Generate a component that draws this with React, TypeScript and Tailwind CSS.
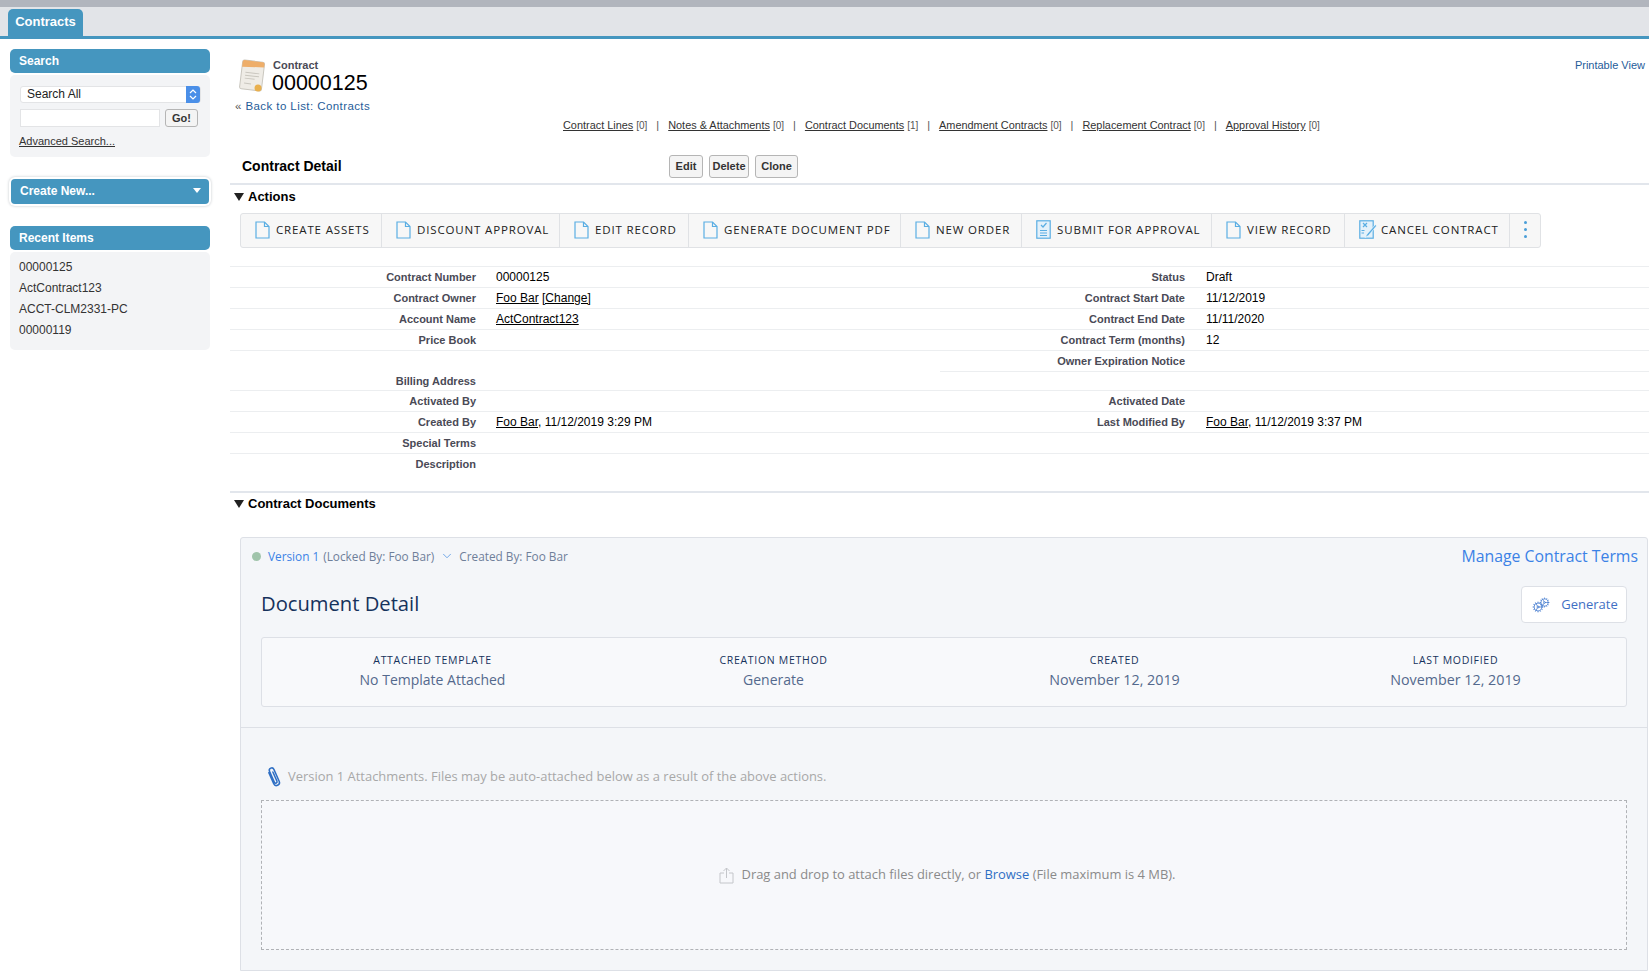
import { ChevronDown, Cog } from "lucide-react";

const arial = "font-['Liberation_Sans',Arial,sans-serif]";
const sf = "font-['Open_Sans',sans-serif]";

const relatedLinks = [
  { label: "Contract Lines", count: "[0]" },
  { label: "Notes & Attachments", count: "[0]" },
  { label: "Contract Documents", count: "[1]" },
  { label: "Amendment Contracts", count: "[0]" },
  { label: "Replacement Contract", count: "[0]" },
  { label: "Approval History", count: "[0]" },
];

const actions = [
  { label: "CREATE ASSETS", w: "w-[141px]", icon: "doc" },
  { label: "DISCOUNT APPROVAL", w: "w-[178px]", icon: "doc" },
  { label: "EDIT RECORD", w: "w-[129px]", icon: "doc" },
  { label: "GENERATE DOCUMENT PDF", w: "w-[212px]", icon: "doc" },
  { label: "NEW ORDER", w: "w-[121px]", icon: "doc" },
  { label: "SUBMIT FOR APPROVAL", w: "w-[190px]", icon: "check" },
  { label: "VIEW RECORD", w: "w-[133px]", icon: "doc" },
  { label: "CANCEL CONTRACT", w: "w-[165px]", icon: "cancel" },
];

const detailButtons = [
  { label: "Edit", w: "w-[34px]" },
  { label: "Delete", w: "w-[40px]" },
  { label: "Clone", w: "w-[43px]" },
];

const DocIcon = () => (
  <svg width="15" height="18" viewBox="0 0 15 18" fill="none" stroke="#5aaee3" strokeWidth="1.2">
    <path d="M1 1h8.5L14 5.5V17H1z" />
    <path d="M9.5 1v4.5H14" />
  </svg>
);

const CheckIcon = () => (
  <svg width="15" height="19" viewBox="0 0 15 19" fill="none" stroke="#5aaee3" strokeWidth="1.2">
    <rect x="0.8" y="0.8" width="13.4" height="17.4" fill="#e4f1fa" />
    <path d="M5 5l2 2 3.5-4M4 10.5h7M4 13h7M4 15.5h7" />
  </svg>
);

const CancelIcon = () => (
  <svg width="18" height="19" viewBox="0 0 18 19" fill="none" stroke="#5aaee3" strokeWidth="1.2">
    <rect x="0.8" y="0.8" width="13.4" height="17.4" fill="#e4f1fa" />
    <path d="M4 3l4 4M8 3L4 7M2.5 10.5h3M2.5 13h2.5" />
    <path d="M16.5 4.5L8 14l-2 3.5 3.5-2L17.5 6z" fill="#5aaee3" stroke="#ffffff" strokeWidth="0.6" />
  </svg>
);

const ContractIcon = () => (
  <svg width="30" height="34" viewBox="0 0 30 34">
    <g transform="rotate(7 15 17)">
      <rect x="4" y="2" width="22" height="29" rx="2" fill="#efece6" stroke="#c9c6be" />
      <path d="M4 9V4a2 2 0 0 1 2-2h18a2 2 0 0 1 2 2v3z" fill="#eeae6a" />
      <path d="M8 14h14M8 17h14M8 20h10M8 25h7" stroke="#c9c6be" />
    </g>
    <circle cx="21" cy="29" r="3.5" fill="#e9b04e" />
  </svg>
);

const PaperclipIcon = () => (
  <svg width="18" height="22" viewBox="0 0 18 22" fill="none" stroke="#2f6fc4" strokeWidth="1.5" strokeLinecap="round">
    <g transform="rotate(-24 9 11)">
      <path d="M6 5v12a3 3 0 0 0 6 0V4a2.4 2.4 0 0 0-4.8 0v12a1.4 1.4 0 0 0 2.8 0V6" />
    </g>
  </svg>
);

const UploadIcon = () => (
  <svg width="15" height="17" viewBox="0 0 15 17" fill="none" stroke="#c4c6ca" strokeWidth="1">
    <path d="M5 6H1v10h13V6h-4" />
    <path d="M7.5 11V1M4.5 4l3-3 3 3" />
  </svg>
);

const Header = ({ title }: { title: string }) => (
  <div className={`h-[24px] rounded-[5px] bg-[#4596bf] pl-[9px] flex items-center text-white font-bold text-[12px] ${arial}`}>
    {title}
  </div>
);

const Row = ({ label, children, tall, line = true }: { label?: string; children?: React.ReactNode; tall?: boolean; line?: boolean }) => (
  <div className={`flex ${tall ? "h-[40px] items-end pb-[1px]" : "h-[21px] items-center"} ${line ? "border-b border-[#eceef0]" : ""}`}>
    <div className="w-[246px] shrink-0 text-right font-bold text-[11px] text-[#4a4a56]">{label}</div>
    <div className="pl-[20px] text-[12px] text-black">{children}</div>
  </div>
);

const RowRight = ({ label, children, short }: { label?: string; children?: React.ReactNode; short?: boolean }) => (
  <div className={`flex ${short ? "h-[19px]" : "h-[21px]"} items-center border-b border-[#eceef0]`}>
    <div className="w-[245px] shrink-0 text-right font-bold text-[11px] text-[#4a4a56]">{label}</div>
    <div className="pl-[21px] text-[12px] text-black">{children}</div>
  </div>
);

const Meta = ({ label, value, size }: { label: string; value: string; size: string }) => (
  <div className="flex-1 flex flex-col items-center pb-[1px]">
    <div className="text-[10.5px] tracking-[0.7px] text-[#16325c] leading-[14px] mb-[3px]">{label}</div>
    <div className={`${size} text-[#54698d] leading-[20px]`}>{value}</div>
  </div>
);

export default function App() {
  return (
    <div className={`w-[1649px] h-[973px] overflow-hidden bg-white ${arial}`}>
      {/* top tab strip */}
      <div className="h-[7px] bg-[#b1b5bd]" />
      <div className="h-[32px] bg-[#e2e4e8] border-b-[3px] border-[#4596bf] pl-[8px] pt-[2px]">
        <div className="w-[75px] h-[27px] rounded-t-[5px] bg-[#4596bf] flex items-center justify-center pb-[1px] text-white font-bold text-[13px]">
          Contracts
        </div>
      </div>

      <div className="flex">
        {/* sidebar */}
        <div className="w-[200px] ml-[10px] mt-[10px] shrink-0">
          <Header title="Search" />
          <div className="mt-[2px] h-[82px] rounded-[5px] bg-[#f3f4f6] px-[9px] pt-[11px]">
            <div className="h-[17px] w-[181px] ml-[1px] flex items-center justify-between rounded-[3px] bg-white border border-[#e3e4e6] pl-[6px] text-[12px] leading-[14px] text-[#222]">
              <span className="pb-[1px]">Search All</span>
              <span className="w-[14px] h-[17px] rounded-r-[3px] bg-[#4a8fe8] flex flex-col items-center justify-center">
                <svg width="8" height="13" viewBox="0 0 8 13" fill="none" stroke="#fff" strokeWidth="1.2">
                  <path d="M1 5l3-3 3 3M1 8l3 3 3-3" />
                </svg>
              </span>
            </div>
            <div className="flex mt-[6px] ml-[1px] gap-[5px]">
              <div className="w-[140px] h-[18px] bg-white border border-[#e3e4e6]" />
              <div className="w-[33px] h-[18px] rounded-[3px] bg-[#f4f4f4] border border-[#b5b5b5] flex items-center justify-center font-bold text-[11px] text-[#333]">
                Go!
              </div>
            </div>
            <div className="mt-[6px] text-[11px] underline text-[#333]">Advanced Search...</div>
          </div>

          <div className="mt-[20px] mx-[-1px] h-[29px] rounded-[6px] bg-white p-[2px] shadow-[0_0_3px_#c4c8cc]">
            <div className="h-[25px] rounded-[4px] bg-[#4596bf] flex items-center justify-between pl-[9px] pr-[8px] pb-[2px] text-white font-bold text-[12px]">
              Create New...
              <span className="w-0 h-0 border-x-[4px] border-x-transparent border-t-[5px] border-t-white" />
            </div>
          </div>

          <div className="mt-[20px]">
            <Header title="Recent Items" />
            <div className="mt-[2px] h-[98px] rounded-[5px] bg-[#f3f4f6] pl-[9px] pt-[5px] text-[12px] text-[#333] leading-[21px]">
              <div>00000125</div>
              <div>ActContract123</div>
              <div>ACCT-CLM2331-PC</div>
              <div>00000119</div>
            </div>
          </div>
        </div>

        {/* main column */}
        <div className="flex-1 ml-[20px] min-w-0">
          <div className="relative h-[80px]">
            <div className="absolute right-[4px] top-[18px] text-[11px] text-[#1f5c99]">Printable View</div>
            <div className="flex pl-[7px] pt-[20px]">
              <ContractIcon />
              <div className="ml-[5px]">
                <div className="font-bold text-[11px] leading-[12px] text-[#4a4a56] ml-[1px]">Contract</div>
                <div className="text-[21.5px] leading-[24px] text-black">00000125</div>
              </div>
            </div>
            <div className="pl-[5px] text-[11.5px] leading-[13px] tracking-[0.42px] text-[#1f5c99] mt-[5px]">
              <span className="text-[#555]">«</span> Back to List: Contracts
            </div>
          </div>

          <div className="ml-[333px] flex items-center text-[10.9px] leading-[13px] text-[#333]">
            {relatedLinks.map((l, i) => (
              <div key={l.label} className="flex items-center">
                {i > 0 && <span className="mx-[9px] text-[#555]">|</span>}
                <span className="underline">{l.label}</span>
                <span className="ml-[3px] text-[10px] text-[#555]">{l.count}</span>
              </div>
            ))}
          </div>

          {/* detail header */}
          <div className="mt-[16px] h-[37px] border-b-2 border-[#e2e6ec] flex items-center pl-[12px] pt-[2px]">
            <div className="w-[427px] font-bold text-[14px] text-black">Contract Detail</div>
            <div className="flex gap-[6px]">
              {detailButtons.map((b) => (
                <div key={b.label} className={`${b.w} h-[23px] rounded-[3px] bg-[#f4f4f4] border border-[#b5b5b5] flex items-center justify-center font-bold text-[11px] text-[#333]`}>
                  {b.label}
                </div>
              ))}
            </div>
          </div>

          <div className="h-[24px] flex items-center pl-[4px] font-bold text-[13px] text-black">
            <span className="w-0 h-0 border-x-[5px] border-x-transparent border-t-[8px] border-t-[#222] mr-[4px]" />
            Actions
          </div>

          {/* actions bar */}
          <div className={`mt-[4px] ml-[10px] w-[1301px] h-[35px] flex rounded-[3px] border border-[#e0e2e5] bg-[#f7f7f7] ${sf}`}>
            {actions.map((a) => (
              <div key={a.label} className={`${a.w} shrink-0 flex items-center pl-[14px] pb-[2px] border-r border-[#e0e2e5] text-[11.5px] tracking-[0.85px] text-[#222]`}>
                <span className={a.icon === "cancel" ? "w-[22px]" : "w-[21px]"}>
                  {a.icon === "doc" && <DocIcon />}
                  {a.icon === "check" && <CheckIcon />}
                  {a.icon === "cancel" && <CancelIcon />}
                </span>
                <span className="whitespace-nowrap">{a.label}</span>
              </div>
            ))}
            <div className="flex-1 flex flex-col items-center justify-center gap-[4px] pb-[2px]">
              <span className="w-[3px] h-[3px] rounded-full bg-[#4a9ed8]" />
              <span className="w-[3px] h-[3px] rounded-full bg-[#4a9ed8]" />
              <span className="w-[3px] h-[3px] rounded-full bg-[#4a9ed8]" />
            </div>
          </div>

          {/* detail rows */}
          <div className="mt-[18px] border-t border-[#eceef0]">
            <div className="flex">
              <div className="w-[710px] shrink-0">
                <Row label="Contract Number">00000125</Row>
                <Row label="Contract Owner"><span className="underline">Foo Bar</span> <span className="underline">[Change]</span></Row>
                <Row label="Account Name"><span className="underline">ActContract123</span></Row>
                <Row label="Price Book" />
                <Row label="Billing Address" tall />
                <Row label="Activated By" />
                <Row label="Created By"><span className="underline">Foo Bar</span>, 11/12/2019 3:29 PM</Row>
              </div>
              <div className="flex-1">
                <RowRight label="Status">Draft</RowRight>
                <RowRight label="Contract Start Date">11/12/2019</RowRight>
                <RowRight label="Contract End Date">11/11/2020</RowRight>
                <RowRight label="Contract Term (months)">12</RowRight>
                <RowRight label="Owner Expiration Notice" />
                <RowRight short />
                <RowRight label="Activated Date" />
                <RowRight label="Last Modified By"><span className="underline">Foo Bar</span>, 11/12/2019 3:37 PM</RowRight>
              </div>
            </div>
            <Row label="Special Terms" />
            <Row label="Description" line={false} />
          </div>

          {/* contract documents */}
          <div className="mt-[16px] border-t-2 border-[#e2e6ec] h-[24px] flex items-center pl-[4px] font-bold text-[13px] text-black">
            <span className="w-0 h-0 border-x-[5px] border-x-transparent border-t-[8px] border-t-[#222] mr-[4px]" />
            Contract Documents
          </div>

          <div className={`mt-[22px] ml-[10px] w-[1408px] h-[434px] rounded-t-[3px] border border-[#dde0e6] bg-[#f4f6f9] ${sf}`}>
            <div className="h-[190px] border-b border-[#dde0e6] relative">
              <div className="flex items-center pl-[11px] pt-[7px] text-[11.8px] text-[#6f7f99] leading-[22px]">
                <span className="w-[9px] h-[9px] rounded-full bg-[#a0c4ab] mr-[7px]" />
                <span className="text-[#3b82e6]">Version 1</span>
                <span className="ml-[4px]">(Locked By: Foo Bar)</span>
                <ChevronDown size={14} strokeWidth={1.3} className="ml-[6px] mr-[4px] text-[#4a90e2]" />
                <span className="ml-[1px]">Created By: Foo Bar</span>
              </div>
              <div className="absolute right-[9px] top-[6px] text-[15.8px] leading-[24px] text-[#3b82e6]">Manage Contract Terms</div>

              <div className="flex items-center justify-between pl-[20px] pr-[20px] mt-[19px] h-[37px]">
                <div className="text-[20.2px] text-[#16325c] pb-[3px]">Document Detail</div>
                <div className="w-[106px] h-[37px] rounded-[4px] bg-white border border-[#dde0e6] flex items-center justify-center gap-[11px] pl-[2px] text-[13px] text-[#3f6fc4]">
                  <span className="relative w-[18px] h-[16px]">
                    <Cog size={12} strokeWidth={1.6} className="absolute left-0 bottom-0 text-[#4a7fd0]" />
                    <Cog size={11} strokeWidth={1.6} className="absolute right-0 top-0 text-[#4a7fd0]" />
                  </span>
                  Generate
                </div>
              </div>

              <div className="mx-[20px] mt-[14px] h-[70px] rounded-[3px] border border-[#dde0e6] bg-[#f8f9fb] flex items-center">
                <Meta label="ATTACHED TEMPLATE" value="No Template Attached" size="text-[14px]" />
                <Meta label="CREATION METHOD" value="Generate" size="text-[14px]" />
                <Meta label="CREATED" value="November 12, 2019" size="text-[14.3px]" />
                <Meta label="LAST MODIFIED" value="November 12, 2019" size="text-[14.3px]" />
              </div>
            </div>

            <div className="flex items-center h-[72px] pl-[24px] pt-[26px] text-[12.95px] text-[#a8a8a8]">
              <span className="mr-[5px]"><PaperclipIcon /></span>
              Version 1 Attachments. Files may be auto-attached below as a result of the above actions.
            </div>

            <div className="mx-[20px] h-[150px] border border-dashed border-[#b0b2b6] bg-[#f7f8fb] flex items-center justify-center pl-[6px] text-[12.95px] text-[#8a8a8a]">
              <span className="mr-[8px]"><UploadIcon /></span>
              Drag and drop to attach files directly, or&nbsp;<span className="text-[#2f6fc4]">Browse</span>&nbsp;(File maximum is 4 MB).
            </div>
          </div>
        </div>
      </div>
    </div>
  );
}
